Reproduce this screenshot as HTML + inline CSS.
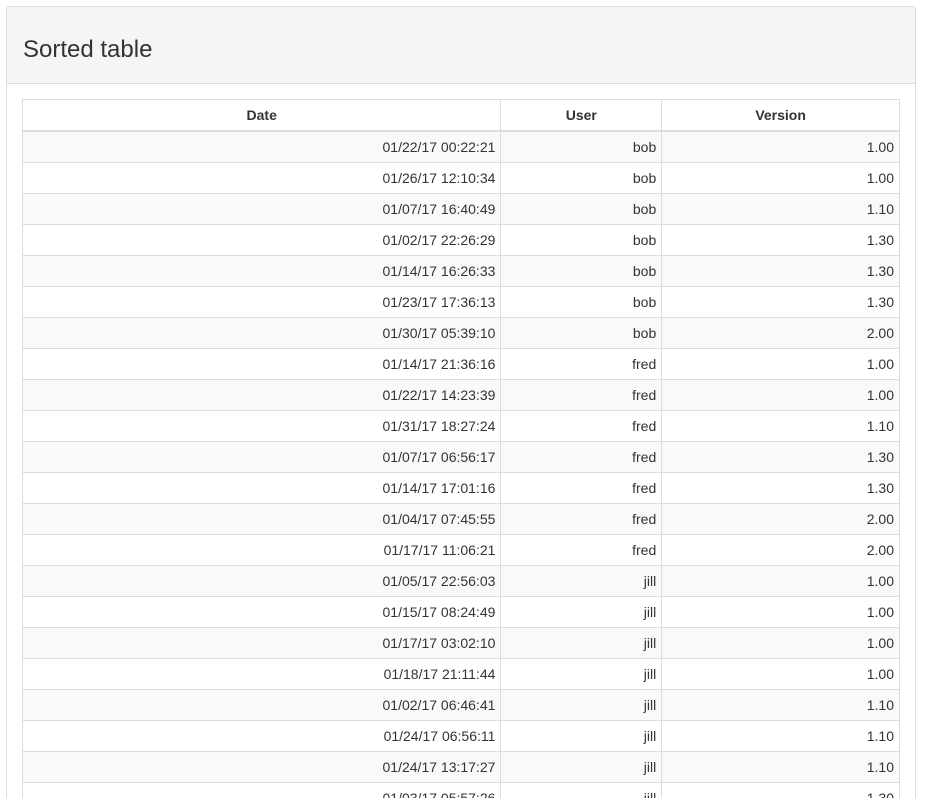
<!DOCTYPE html>
<html><head><style>
html,body{margin:0;padding:0;background:#fff;overflow:hidden;width:925px;height:798px}
body{font-family:"Liberation Sans",Arial,sans-serif;font-size:14px;color:#333}
.panel{position:absolute;left:6px;top:6px;width:908px;height:800px;border:1px solid #ddd;border-bottom:none;border-radius:4px 4px 0 0;background:#fff;overflow:hidden}
.wrap{position:absolute;left:0;top:0;width:925px;height:798px;overflow:hidden}
.ph{height:76px;background:#f5f5f5;border-bottom:1px solid #ddd;border-radius:4px 4px 0 0}
.ph h3{margin:0;position:absolute;left:16px;top:30px;font-size:24px;font-weight:normal;line-height:26px;color:#333}
table{position:absolute;left:15px;top:92px;width:878px;border-collapse:collapse}
th,td{border:1px solid #ddd;padding:0 5px;height:30px;line-height:30px}
th{font-weight:bold;text-align:center;border-bottom:2px solid #ddd;height:30px}
td{text-align:right}
tbody tr:nth-child(odd) td{background:#f9f9f9}
</style></head><body>
<div class="wrap">
<div class="panel"><div class="ph"><h3>Sorted table</h3></div>
<table>
<colgroup><col style="width:479px"><col style="width:161px"><col style="width:238px"></colgroup>
<thead><tr><th>Date</th><th>User</th><th>Version</th></tr></thead>
<tbody>
<tr><td>01/22/17 00:22:21</td><td>bob</td><td>1.00</td></tr>
<tr><td>01/26/17 12:10:34</td><td>bob</td><td>1.00</td></tr>
<tr><td>01/07/17 16:40:49</td><td>bob</td><td>1.10</td></tr>
<tr><td>01/02/17 22:26:29</td><td>bob</td><td>1.30</td></tr>
<tr><td>01/14/17 16:26:33</td><td>bob</td><td>1.30</td></tr>
<tr><td>01/23/17 17:36:13</td><td>bob</td><td>1.30</td></tr>
<tr><td>01/30/17 05:39:10</td><td>bob</td><td>2.00</td></tr>
<tr><td>01/14/17 21:36:16</td><td>fred</td><td>1.00</td></tr>
<tr><td>01/22/17 14:23:39</td><td>fred</td><td>1.00</td></tr>
<tr><td>01/31/17 18:27:24</td><td>fred</td><td>1.10</td></tr>
<tr><td>01/07/17 06:56:17</td><td>fred</td><td>1.30</td></tr>
<tr><td>01/14/17 17:01:16</td><td>fred</td><td>1.30</td></tr>
<tr><td>01/04/17 07:45:55</td><td>fred</td><td>2.00</td></tr>
<tr><td>01/17/17 11:06:21</td><td>fred</td><td>2.00</td></tr>
<tr><td>01/05/17 22:56:03</td><td>jill</td><td>1.00</td></tr>
<tr><td>01/15/17 08:24:49</td><td>jill</td><td>1.00</td></tr>
<tr><td>01/17/17 03:02:10</td><td>jill</td><td>1.00</td></tr>
<tr><td>01/18/17 21:11:44</td><td>jill</td><td>1.00</td></tr>
<tr><td>01/02/17 06:46:41</td><td>jill</td><td>1.10</td></tr>
<tr><td>01/24/17 06:56:11</td><td>jill</td><td>1.10</td></tr>
<tr><td>01/24/17 13:17:27</td><td>jill</td><td>1.10</td></tr>
<tr><td>01/03/17 05:57:26</td><td>jill</td><td>1.30</td></tr>
</tbody></table></div>
</div>
</body></html>
